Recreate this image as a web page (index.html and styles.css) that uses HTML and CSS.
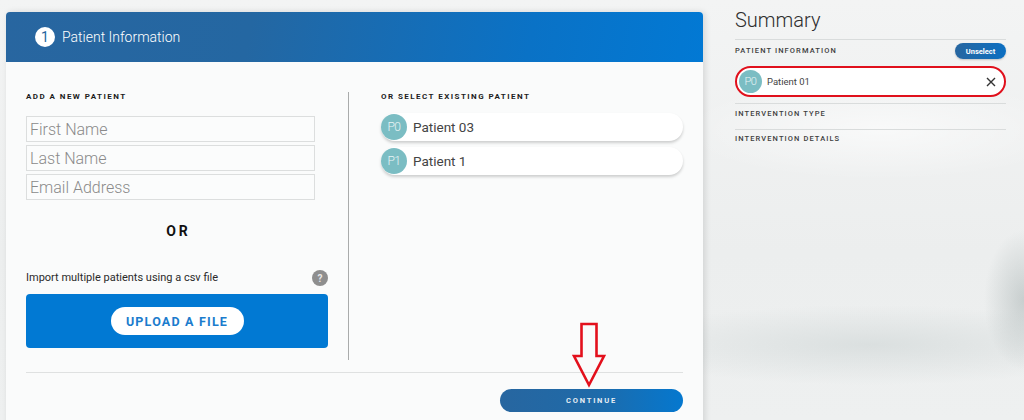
FILE: index.html
```html
<!DOCTYPE html>
<html>
<head>
<meta charset="utf-8">
<link rel="stylesheet" href="styles.css">
</head>
<body>
<div class="page">
  <section class="card">
    <header class="card-head">
      <span class="step">1</span>
      <span class="head-title">Patient Information</span>
    </header>
    <div class="card-body">
      <div class="columns">
        <div class="col-left">
          <h3 class="label">ADD A NEW PATIENT</h3>
          <div class="inputs">
            <input class="field" type="text" placeholder="First Name">
            <input class="field" type="text" placeholder="Last Name">
            <input class="field" type="text" placeholder="Email Address">
          </div>
          <div class="or">OR</div>
          <div class="import-row">
            <span class="import-text">Import multiple patients using a csv file</span>
            <span class="help">?</span>
          </div>
          <div class="upload-box">
            <button class="upload-btn">UPLOAD A FILE</button>
          </div>
        </div>
        <div class="divider"></div>
        <div class="col-right">
          <h3 class="label">OR SELECT EXISTING PATIENT</h3>
          <div class="patient-list">
            <div class="patient-row"><span class="avatar">P0</span><span class="pname">Patient 03</span></div>
            <div class="patient-row"><span class="avatar">P1</span><span class="pname">Patient 1</span></div>
          </div>
        </div>
      </div>
      <div class="footer">
        <button class="continue">CONTINUE</button>
      </div>
    </div>
    <svg class="arrow" width="36" height="66" viewBox="0 0 36 66">
      <polygon points="10.5,2 25.5,2 25.5,34 33,34 18,63 3,34 10.5,34" fill="none" stroke="#e3101c" stroke-width="2.6" stroke-linejoin="miter"/>
    </svg>
  </section>
  <aside class="summary">
    <h2 class="sum-title">Summary</h2>
    <div class="sum-section">
      <div class="sum-row">
        <span class="sum-label">PATIENT INFORMATION</span>
        <button class="unselect">Unselect</button>
      </div>
      <div class="selected">
        <span class="avatar small">P0</span>
        <span class="sel-name">Patient 01</span>
        <svg class="close" width="10" height="10" viewBox="0 0 10 10"><path d="M1 1 L9 9 M9 1 L1 9" stroke="#333" stroke-width="1.4" fill="none"/></svg>
      </div>
    </div>
    <div class="sum-section plain">
      <span class="sum-label">INTERVENTION TYPE</span>
    </div>
    <div class="sum-section last">
      <span class="sum-label">INTERVENTION DETAILS</span>
    </div>
  </aside>
</div>
</body>
</html>
```

FILE: styles.css
```css
* { box-sizing: border-box; }
html, body {
  margin: 0;
  height: 420px;
  overflow: hidden;
}
body {
  font-family: Roboto, "Liberation Sans", Arial, sans-serif;
  background:
    radial-gradient(ellipse 40px 70px at 1024px 300px, rgba(170,180,180,0.55), rgba(170,180,180,0) 100%),
    radial-gradient(ellipse 260px 40px at 870px 345px, rgba(200,208,208,0.5), rgba(200,208,208,0) 100%),
    radial-gradient(ellipse 200px 50px at 880px 130px, rgba(255,255,255,0.6), rgba(255,255,255,0) 100%),
    linear-gradient(180deg, #f3f4f4 0%, #eceeee 60%, #eef0f0 100%);
}
.page {
  display: flex;
  align-items: flex-start;
  padding-left: 6px;
}
.card {
  position: relative;
  margin-top: 12px;
  width: 697px;
  height: 420px;
  background: #fafbfb;
  border-radius: 4px 4px 0 0;
  box-shadow: 2px 0 6px rgba(0,0,0,0.12);
}
.card-head {
  height: 50px;
  display: flex;
  align-items: center;
  padding-left: 29px;
  border-radius: 4px 4px 0 0;
  background: linear-gradient(100deg, #2866a0 0%, #2467a2 35%, #0a72c6 75%, #0279d4 100%);
}
.step {
  width: 20px;
  height: 20px;
  border-radius: 50%;
  background: #fff;
  color: #2566a0;
  font-size: 14px;
  font-weight: 400;
  display: flex;
  align-items: center;
  justify-content: center;
}
.head-title {
  margin-left: 7px;
  color: #fff;
  font-size: 14px;
  font-weight: 300;
}
.card-body {
  padding: 30px 20px 0 20px;
}
.columns {
  display: flex;
  height: 268px;
}
.col-left {
  width: 302px;
  display: flex;
  flex-direction: column;
}
.divider {
  width: 1px;
  margin-left: 20px;
  background: #a9abab;
}
.col-right {
  flex: 1;
  margin-left: 32px;
}
.label {
  margin: 0;
  font-size: 8px;
  line-height: 10px;
  font-weight: 700;
  letter-spacing: 1.45px;
  color: #1d1d1d;
}
.inputs {
  margin-top: 14px;
  width: 289px;
  display: flex;
  flex-direction: column;
  gap: 3px;
}
.field {
  height: 26px;
  border: 1px solid #dcdede;
  background: #fbfcfc;
  padding: 0 3px;
  font-family: Roboto, "Liberation Sans", sans-serif;
  font-size: 16px;
  font-weight: 300;
  color: #444;
  outline: none;
}
.field::placeholder { color: #8a8a8a; }
.or {
  margin-top: 21px;
  text-align: center;
  font-size: 14px;
  line-height: 20px;
  font-weight: 700;
  letter-spacing: 3px;
  color: #111;
  padding-left: 3px;
}
.import-row {
  margin-top: 28px;
  display: flex;
  align-items: center;
  justify-content: space-between;
  height: 16px;
}
.import-text {
  font-size: 11px;
  color: #2a2a2a;
}
.help {
  width: 16px;
  height: 16px;
  border-radius: 50%;
  background: #8e8e8e;
  color: #e8e8e8;
  font-size: 10px;
  font-weight: 700;
  display: flex;
  align-items: center;
  justify-content: center;
  margin-top: 2px;
}
.upload-box {
  margin-top: 9px;
  height: 54px;
  border-radius: 4px;
  background: #0179d3;
  display: flex;
  align-items: center;
  justify-content: center;
}
.upload-btn {
  width: 133px;
  height: 28px;
  border: none;
  border-radius: 14px;
  background: #fff;
  color: #1b7ccd;
  font-family: Roboto, "Liberation Sans", sans-serif;
  font-size: 12.5px;
  font-weight: 700;
  letter-spacing: 1.2px;
  padding: 0;
}
.patient-list {
  margin-top: 11px;
  display: flex;
  flex-direction: column;
  gap: 6px;
}
.patient-row {
  height: 28px;
  display: flex;
  align-items: center;
  background: #fff;
  border-radius: 14px;
  box-shadow: 0 2px 3px rgba(0,0,0,0.18);
}
.avatar {
  width: 26px;
  height: 26px;
  border-radius: 50%;
  background: #7bbdc3;
  color: #e8f4f5;
  font-size: 12px;
  font-weight: 300;
  display: flex;
  align-items: center;
  justify-content: center;
  flex-shrink: 0;
  letter-spacing: -0.5px;
}
.pname {
  margin-left: 6px;
  font-size: 13.5px;
  color: #444;
}
.footer {
  margin-top: 12px;
  border-top: 1px solid #dfe1e1;
  display: flex;
  justify-content: flex-end;
  padding-top: 16px;
}
.continue {
  width: 183px;
  height: 23px;
  border: none;
  border-radius: 12px;
  background: linear-gradient(90deg, #2766a0 0%, #1f6aa8 50%, #0578cf 100%);
  color: #e6edf4;
  font-family: Roboto, "Liberation Sans", sans-serif;
  font-size: 7.5px;
  font-weight: 700;
  letter-spacing: 1.8px;
  padding: 0;
}
.arrow {
  position: absolute;
  left: 565px;
  top: 310px;
}
.summary {
  margin-left: 32px;
  margin-top: 8px;
  width: 271px;
}
.sum-title {
  margin: 0;
  font-size: 20px;
  line-height: 24px;
  font-weight: 300;
  color: #2e2e2e;
  padding-bottom: 7px;
  border-bottom: 1px solid #d9dcdc;
}
.sum-section {
  border-bottom: 1px solid #d9dcdc;
  padding: 3px 0 6px;
}
.sum-row {
  height: 16px;
  display: flex;
  align-items: center;
  justify-content: space-between;
}
.sum-label {
  display: block;
  font-size: 7.5px;
  line-height: 12px;
  font-weight: 500;
  letter-spacing: 1.1px;
  color: #3e3e3e;
}
.unselect {
  width: 51px;
  height: 16px;
  border: none;
  border-radius: 8px;
  background: linear-gradient(90deg, #2766a0, #0b6fc2);
  color: #fff;
  font-family: Roboto, "Liberation Sans", sans-serif;
  font-size: 7.5px;
  font-weight: 700;
  padding: 0;
  box-shadow: 0 1px 2px rgba(0,0,0,0.2);
}
.selected {
  margin-top: 7px;
  height: 31px;
  border: 2px solid #e0101c;
  border-radius: 16px;
  background: #fff;
  display: flex;
  align-items: center;
  padding-left: 2px;
  padding-right: 8px;
}
.avatar.small {
  width: 23px;
  height: 23px;
  font-size: 11px;
}
.sel-name {
  margin-left: 5px;
  font-size: 9.5px;
  color: #444;
  flex: 1;
}
.sum-section.plain {
  padding: 4px 0 9px;
}
.sum-section.last {
  border-bottom: none;
  padding: 3px 0 0;
}
```
